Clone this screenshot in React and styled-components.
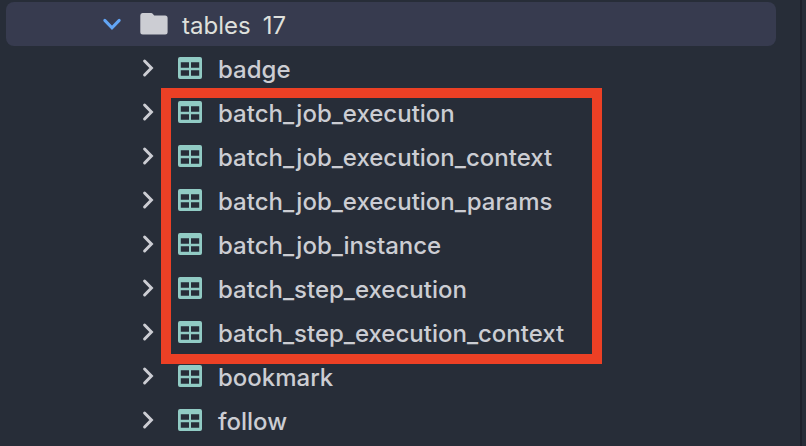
import styled, { createGlobalStyle } from "styled-components";

const GlobalStyle = createGlobalStyle`
  * {
    box-sizing: border-box;
  }

  body {
    margin: 0;
    background-color: #272d38;
    color: #cccdd3;
    font-family: Inter, "Liberation Sans", sans-serif;
    font-size: 24px;
    line-height: 44px;
  }
`;

// Layout
const Layout = styled.div`
  display: grid;
  grid-template-columns: 1fr 2px 4px;
  height: 100vh;
  overflow: hidden;
`;

const Sidebar = styled.nav`
  padding: 2px 24px 0 6px;
`;

const Divider = styled.div`
  background-color: #1d212b;
`;

const List = styled.ul`
  list-style: none;
  margin: 0;
  padding: 0;
`;

const MarkedList = styled(List)`
  position: relative;
  width: fit-content;
  padding-right: 38px;

  &::after {
    content: "";
    position: absolute;
    inset: -2px 0 -10px 155px;
    border: 10px solid #ec4025;
    pointer-events: none;
  }
`;

// Rows
const FolderRow = styled.div`
  display: flex;
  align-items: center;
  height: 44px;
  padding-left: 96px;
  border-radius: 8px;
  background-color: #373b4f;
  color: #dfe0dc;
`;

const TableRow = styled.li`
  display: flex;
  align-items: center;
  height: 44px;
  padding-left: 132px;
`;

const Toggle = styled.button`
  display: flex;
  padding: 0;
  border: none;
  background: none;
  color: ${({ $open }) => ($open ? "#62a5f5" : "#cccdd3")};
`;

const FolderName = styled.span`
  margin-left: 14px;
  padding-top: 4px;
`;

const Count = styled.span`
  margin-left: 12px;
  padding-top: 4px;
`;

const TableName = styled.span`
  margin-left: 16px;
  padding-top: 4px;
  font-weight: 500;
`;

// Icons
const FolderSvg = styled.svg`
  margin-left: 18px;
`;

const TableSvg = styled.svg`
  margin-left: 20px;
`;

function ChevronDown() {
  return (
    <svg width="20" height="20" viewBox="0 0 20 20" fill="none">
      <path
        d="M2.8 6.4 10 13.8l7.2-7.4"
        stroke="currentColor"
        strokeWidth="3"
        strokeLinecap="round"
      />
    </svg>
  );
}

function ChevronRight() {
  return (
    <svg width="20" height="20" viewBox="0 0 20 20" fill="none">
      <path
        d="m6.6 3 6.8 7-6.8 7"
        stroke="currentColor"
        strokeWidth="3"
        strokeLinecap="round"
      />
    </svg>
  );
}

function FolderIcon() {
  return (
    <FolderSvg width="28" height="22" viewBox="0 0 28 22" fill="#cccdd3">
      <path d="M2.5 0h8.6c.7 0 1.2.3 1.6.8l1.5 1.7h10.9a2.5 2.5 0 0 1 2.5 2.5v14a2.5 2.5 0 0 1-2.5 2.5H2.8A2.5 2.5 0 0 1 .3 19V2.5A2.4 2.4 0 0 1 2.5 0Z" />
    </FolderSvg>
  );
}

function TableIcon() {
  return (
    <TableSvg width="24" height="22" viewBox="0 0 24 22" fill="#91cbc4">
      <path
        fillRule="evenodd"
        d="M2 0h20a2 2 0 0 1 2 2v18a2 2 0 0 1-2 2H2a2 2 0 0 1-2-2V2a2 2 0 0 1 2-2ZM2.8 5.3v5.4H11V5.3ZM13 5.3v5.4h8.2V5.3ZM2.8 13.3v5.4H11v-5.4ZM13 13.3v5.4h8.2v-5.4Z"
      />
    </TableSvg>
  );
}

const batchTables = [
  "batch_job_execution",
  "batch_job_execution_context",
  "batch_job_execution_params",
  "batch_job_instance",
  "batch_step_execution",
  "batch_step_execution_context",
];

function TableItem({ name }) {
  return (
    <TableRow>
      <Toggle type="button" aria-label={`Expand ${name}`} aria-expanded="false">
        <ChevronRight />
      </Toggle>
      <TableIcon />
      <TableName>{name}</TableName>
    </TableRow>
  );
}

export default function App() {
  return (
    <>
      <GlobalStyle />
      <Layout>
        <Sidebar>
          <FolderRow>
            <Toggle type="button" $open aria-label="Collapse tables" aria-expanded="true">
              <ChevronDown />
            </Toggle>
            <FolderIcon />
            <FolderName>tables</FolderName>
            <Count>17</Count>
          </FolderRow>
          <List>
            <TableItem name="badge" />
          </List>
          <MarkedList>
            {batchTables.map((name) => (
              <TableItem key={name} name={name} />
            ))}
          </MarkedList>
          <List>
            <TableItem name="bookmark" />
            <TableItem name="follow" />
          </List>
        </Sidebar>
        <Divider />
      </Layout>
    </>
  );
}
